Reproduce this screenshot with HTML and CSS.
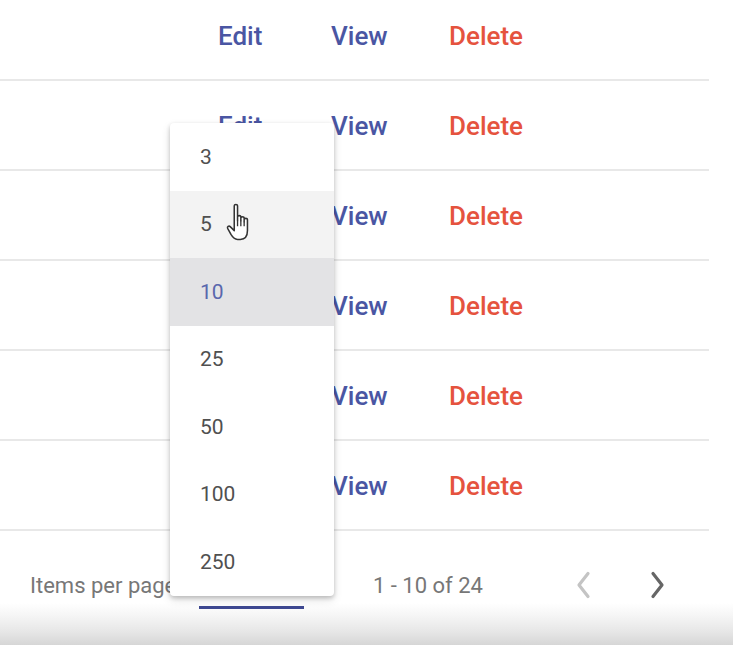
FILE: index.html
```html
<!DOCTYPE html>
<html>
<head>
<meta charset="utf-8">
<link rel="stylesheet" href="styles.css">
</head>
<body>
<div class="page">
  <div class="table">
    <div class="row first"><span class="act edit">Edit</span><span class="act view">View</span><span class="act del">Delete</span></div>
    <div class="row"><span class="act edit">Edit</span><span class="act view">View</span><span class="act del">Delete</span></div>
    <div class="row"><span class="act edit">Edit</span><span class="act view">View</span><span class="act del">Delete</span></div>
    <div class="row"><span class="act edit">Edit</span><span class="act view">View</span><span class="act del">Delete</span></div>
    <div class="row"><span class="act edit">Edit</span><span class="act view">View</span><span class="act del">Delete</span></div>
    <div class="row"><span class="act edit">Edit</span><span class="act view">View</span><span class="act del">Delete</span></div>
  </div>
  <div class="paginator">
    <span class="label">Items per page:</span>
    <div class="select"><span class="underline"></span></div>
    <span class="range">1 - 10 of 24</span>
    <button class="nav prev" aria-label="Previous page">
      <svg width="24" height="30" viewBox="0 0 24 30"><polyline points="17,3.5 8,15 17,26.5" fill="none" stroke="#c4c4c4" stroke-width="3.2" stroke-linecap="round" stroke-linejoin="round"/></svg>
    </button>
    <button class="nav next" aria-label="Next page">
      <svg width="24" height="30" viewBox="0 0 24 30"><polyline points="7,3.5 16,15 7,26.5" fill="none" stroke="#666" stroke-width="3.2" stroke-linecap="round" stroke-linejoin="round"/></svg>
    </button>
  </div>
  <div class="menu">
    <div class="opt">3</div>
    <div class="opt hover">5</div>
    <div class="opt selected">10</div>
    <div class="opt">25</div>
    <div class="opt">50</div>
    <div class="opt">100</div>
    <div class="opt">250</div>
  </div>
  <svg class="cursor" width="30" height="40" viewBox="0 0 30 40">
    <path d="M7.5 3.5 C7.5 1.8 10.5 1.8 10.5 3.5 L10.5 17 L10.5 13.5 C10.5 12 13.5 12 13.5 13.5 L13.5 17 L13.5 14.5 C13.5 13 16.5 13 16.5 14.5 L16.5 18 L16.5 16 C16.5 14.5 19.5 14.5 19.5 16 L19.5 26 C19.5 31 17 34 13 34 L10.5 34 C7.5 34 6 32 4.5 29.5 L1.5 24 C0.8 22.6 2.6 21.2 3.8 22.4 L7.5 26 Z" fill="#fff" stroke="#333" stroke-width="1.4" stroke-linejoin="round"/>
    <path d="M10.5 17 L10.5 22 M13.5 17 L13.5 22 M16.5 18 L16.5 22" stroke="#333" stroke-width="1.2" fill="none"/>
  </svg>
</div>
</body>
</html>
```

FILE: styles.css
```css
html, body {
  margin: 0;
  padding: 0;
  background: #fff;
}
.page {
  position: relative;
  width: 733px;
  height: 645px;
  overflow: hidden;
  font-family: Roboto, "Liberation Sans", sans-serif;
}
.table {
  width: 709px;
  margin-top: -9px;
}
.row {
  display: flex;
  align-items: center;
  height: 88px;
  border-bottom: 2px solid #e8e8e8;
  padding-left: 218px;
}
.act {
  font-size: 26px;
  font-weight: 500;
  line-height: 1;
  position: relative;
  top: 1px;
}
.edit { width: 113px; color: #4a56a3; }
.view { width: 118px; color: #4a56a3; }
.del { color: #e5533e; }
.paginator {
  display: flex;
  align-items: center;
  height: 114px;
  padding-left: 30px;
  box-sizing: border-box;
  background: linear-gradient(to bottom, #fff 0px, #fff 72px, #f6f6f6 84px, #e6e6e6 101px, #d6d6d6 114px);
  color: #777;
  font-size: 22px;
}
.paginator > * {
  position: relative;
  top: -3px;
}
.label {
  width: 169px;
  white-space: nowrap;
}
.select {
  position: relative;
  width: 105px;
  height: 30px;
}
.underline {
  position: absolute;
  left: 0;
  right: 0;
  bottom: -9px;
  height: 3px;
  background: #3e4891;
}
.range {
  margin-left: 69px;
  width: 196px;
}
.nav {
  border: 0;
  background: transparent;
  padding: 0;
  width: 24px;
  height: 30px;
  display: flex;
}
.prev { margin-left: 2px; }
.next { margin-left: 51px; }
.menu {
  position: absolute;
  left: 170px;
  top: 123px;
  width: 164px;
  background: #fff;
  border-radius: 4px;
  box-shadow: 0 2px 4px rgba(0,0,0,0.2), 0 4px 10px rgba(0,0,0,0.12);
  overflow: hidden;
}
.opt {
  height: 67.5px;
  display: flex;
  align-items: center;
  padding-left: 30px;
  font-size: 21px;
  color: #505050;
}
.opt.hover { background: #f3f3f3; }
.opt.selected { background: #e3e3e5; color: #5a67ad; }
.cursor {
  position: absolute;
  left: 226px;
  top: 202px;
  width: 33px;
  height: 44px;
}
```
